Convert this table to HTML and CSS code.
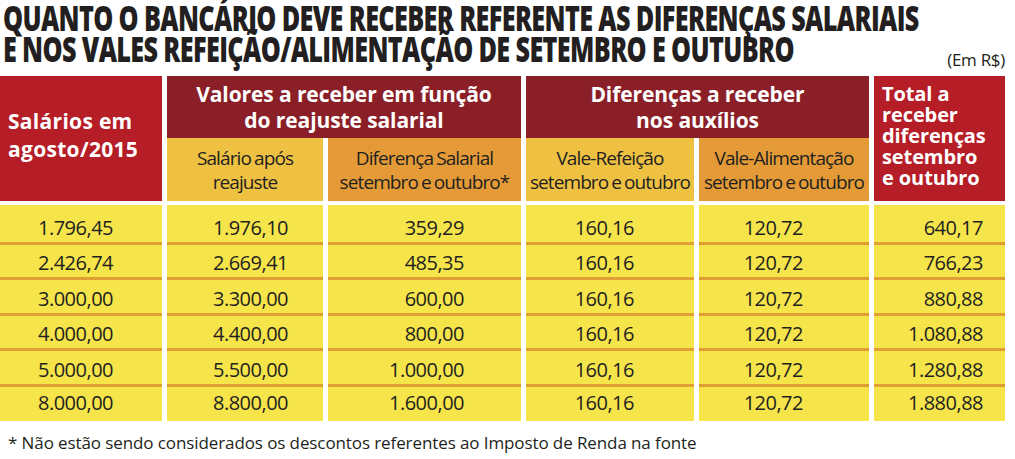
FILE: index.html
```html
<!DOCTYPE html>
<html lang="pt-BR">
<head>
<meta charset="utf-8">
<title>Quanto o bancário deve receber</title>
<link rel="stylesheet" href="styles.css">
</head>
<body>
<div class="page">
  <header class="top">
    <h1 class="title">
      <span class="title-line">QUANTO O BANCÁRIO DEVE RECEBER REFERENTE AS DIFERENÇAS SALARIAIS</span>
      <span class="title-line">E NOS VALES REFEIÇÃO/ALIMENTAÇÃO DE SETEMBRO E OUTUBRO</span>
    </h1>
    <div class="unit">(Em R$)</div>
  </header>

  <div class="thead">
    <div class="h main c-first">Salários em<br>agosto/2015</div>
    <div class="h group g-a">Valores a receber em função<br>do reajuste salarial</div>
    <div class="h group g-b">Diferenças a receber<br>nos auxílios</div>
    <div class="h main c-last">Total a<br>receber<br>diferenças<br>setembro<br>e outubro</div>
    <div class="h sub gold">Salário após<br>reajuste</div>
    <div class="h sub orange">Diferença Salarial<br>setembro e outubro*</div>
    <div class="h sub gold">Vale-Refeição<br>setembro e outubro</div>
    <div class="h sub orange">Vale-Alimentação<br>setembro e outubro</div>
  </div>

  <div class="tbody">
    <div class="d k1">1.796,45</div><div class="d k2">1.976,10</div><div class="d k3">359,29</div><div class="d k4">160,16</div><div class="d k5">120,72</div><div class="d k6">640,17</div>
    <div class="d k1">2.426,74</div><div class="d k2">2.669,41</div><div class="d k3">485,35</div><div class="d k4">160,16</div><div class="d k5">120,72</div><div class="d k6">766,23</div>
    <div class="d k1">3.000,00</div><div class="d k2">3.300,00</div><div class="d k3">600,00</div><div class="d k4">160,16</div><div class="d k5">120,72</div><div class="d k6">880,88</div>
    <div class="d k1">4.000,00</div><div class="d k2">4.400,00</div><div class="d k3">800,00</div><div class="d k4">160,16</div><div class="d k5">120,72</div><div class="d k6">1.080,88</div>
    <div class="d k1">5.000,00</div><div class="d k2">5.500,00</div><div class="d k3">1.000,00</div><div class="d k4">160,16</div><div class="d k5">120,72</div><div class="d k6">1.280,88</div>
    <div class="d k1 last">8.000,00</div><div class="d k2 last">8.800,00</div><div class="d k3 last">1.600,00</div><div class="d k4 last">160,16</div><div class="d k5 last">120,72</div><div class="d k6 last">1.880,88</div>
  </div>

  <p class="note">* Não estão sendo considerados os descontos referentes ao Imposto de Renda na fonte</p>
</div>
</body>
</html>
```

FILE: styles.css
```css
* { box-sizing: border-box; }

html, body {
  margin: 0;
  padding: 0;
  background: #ffffff;
}

body {
  font-family: "Open Sans", "Noto Sans", "Liberation Sans", sans-serif;
  color: #231f20;
}

.page {
  width: 1005px;
}

.top {
  height: 76px;
  display: grid;
  grid-template-columns: minmax(0, 1fr);
  grid-template-rows: 76px;
}

.title {
  grid-area: 1 / 1;
  justify-self: start;
  align-self: start;
  width: max-content;
  margin: 0;
  padding-top: 2px;
  padding-left: 3px;
  font-size: 36px;
  font-weight: 800;
  line-height: 31px;
  letter-spacing: -0.9px;
  white-space: nowrap;
  display: flex;
  flex-direction: column;
  transform: scaleX(0.70);
  transform-origin: 3px 0;
}

.title-line {
  display: block;
}

.unit {
  grid-area: 1 / 1;
  justify-self: end;
  align-self: end;
  font-size: 17px;
  line-height: 20px;
  letter-spacing: -0.3px;
  margin-bottom: 6px;
}

.thead,
.tbody {
  display: grid;
  grid-template-columns: 162px 156px 193px 168px 170px 131px;
  column-gap: 5px;
}

.thead {
  grid-template-rows: 62px 63px;
}

.h {
  display: flex;
  flex-direction: column;
  justify-content: center;
}

.main {
  grid-row: 1 / span 2;
  background: #b51d27;
  color: #ffffff;
  font-weight: 700;
  padding-left: 8px;
}

.c-first {
  grid-column: 1;
  font-size: 21px;
  letter-spacing: 0.3px;
  line-height: 28px;
  padding-bottom: 8px;
}

.c-last {
  grid-column: 6;
  font-size: 20px;
  letter-spacing: -0.1px;
  line-height: 21px;
  padding-bottom: 7px;
}

.group {
  background: #8b1f27;
  color: #ffffff;
  font-weight: 700;
  font-size: 21px;
  line-height: 26px;
  letter-spacing: -0.1px;
  text-align: center;
  grid-row: 1;
}

.g-a { grid-column: 2 / span 2; }
.g-b { grid-column: 4 / span 2; }

.sub {
  grid-row: 2;
  font-size: 19px;
  line-height: 24px;
  letter-spacing: -0.9px;
  word-spacing: -1px;
  text-align: center;
  color: #231f20;
}

.gold { background: #efc142; }
.orange { background: #e49b37; }

.tbody {
  margin-top: 4px;
  grid-template-rows: 40px repeat(4, 35.4px) 34px;
}

.d {
  background: #f6e44b;
  border-bottom: 3px solid #df9f33;
  font-size: 20px;
  line-height: 20px;
  letter-spacing: -0.5px;
  display: flex;
  align-items: flex-end;
  justify-content: flex-end;
  padding-bottom: 4px;
}

.d.last {
  border-bottom: 0;
  padding-bottom: 8px;
}

.k1 { padding-right: 49px; }
.k2 { padding-right: 35px; }
.k3 { padding-right: 57px; }
.k4 { padding-right: 60px; }
.k5 { padding-right: 66px; }
.k6 { padding-right: 22px; }

.note {
  margin: 12px 0 0;
  padding-left: 8px;
  font-size: 17px;
  line-height: 20px;
  letter-spacing: -0.1px;
  white-space: nowrap;
}
```
